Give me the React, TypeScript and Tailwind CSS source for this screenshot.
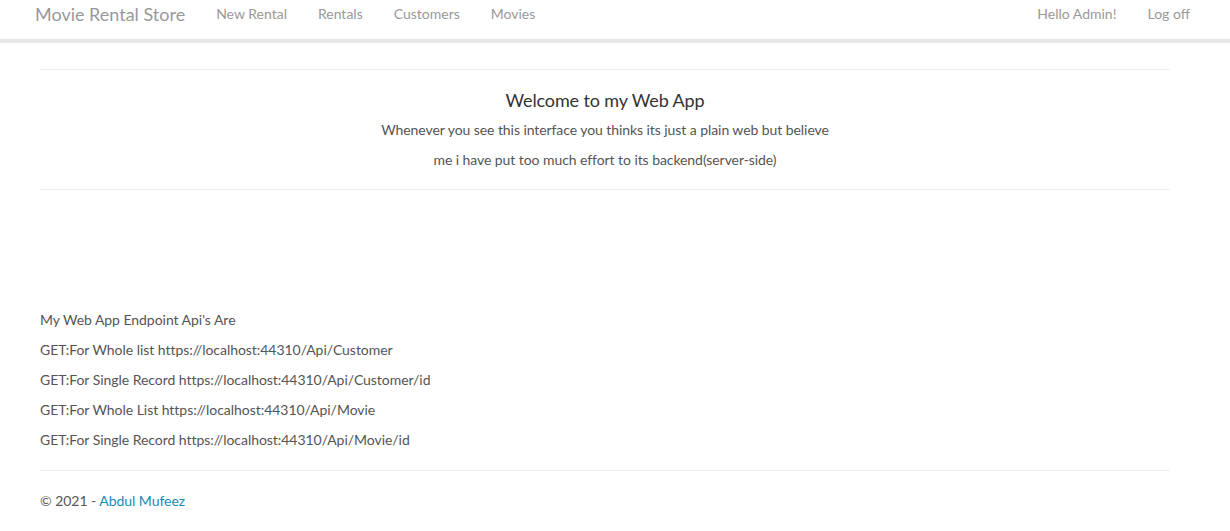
export default function App() {
  const endpoints = [
    "My Web App Endpoint Api's Are",
    "GET:For Whole list https://localhost:44310/Api/Customer",
    "GET:For Single Record https://localhost:44310/Api/Customer/id",
    "GET:For Whole List https://localhost:44310/Api/Movie",
    "GET:For Single Record https://localhost:44310/Api/Movie/id",
  ];
  return (
    <div className="min-h-[531px] bg-white text-[14px] text-[#555555]" style={{ fontFamily: "Lato, 'Noto Sans', sans-serif" }}>
      <nav className="h-[43px] border-b-4 border-[#e7e7e7] bg-white flex items-start justify-between px-[35px] pr-[40px]">
        <div className="flex items-center gap-[31px] h-[28px]">
          <span className="text-[18px] leading-[20px] text-[#999999]">Movie Rental Store</span>
          <span className="text-[14px] leading-[20px] text-[#999999]">New Rental</span>
          <span className="text-[14px] leading-[20px] text-[#999999]">Rentals</span>
          <span className="text-[14px] leading-[20px] text-[#999999]">Customers</span>
          <span className="text-[14px] leading-[20px] text-[#999999]">Movies</span>
        </div>
        <div className="flex items-center gap-[31px] h-[28px]">
          <span className="text-[14px] leading-[20px] text-[#999999]">Hello Admin!</span>
          <span className="text-[14px] leading-[20px] text-[#999999]">Log off</span>
        </div>
      </nav>
      <main className="mx-[40px] w-[1130px]">
        <div className="pt-[26px]">
          <hr className="border-t border-[#eeeeee]" />
        </div>
        <div className="text-center pt-[20px] pb-[19px]">
          <h2 className="text-[18px] leading-[20px] text-[#333333] tracking-[-0.12px] mb-[10px]">Welcome to my Web App</h2>
          <p className="leading-[20px] tracking-[-0.07px] mb-[10px]">Whenever you see this interface you thinks its just a plain web but believe</p>
          <p className="leading-[20px] tracking-[-0.07px]">me i have put too much effort to its backend(server-side)</p>
        </div>
        <hr className="border-t border-[#eeeeee]" />
        <div className="pt-[120px] flex flex-col gap-[10px] tracking-[-0.04px]">
          {endpoints.map((e) => (
            <p key={e} className="leading-[20px]">{e}</p>
          ))}
        </div>
        <hr className="mt-[20px] border-t border-[#eeeeee]" />
        <footer className="pt-[20px] leading-[20px] tracking-[-0.04px]">
          © 2021 - <span className="text-[#158cba]">Abdul Mufeez</span>
        </footer>
      </main>
    </div>
  );
}
